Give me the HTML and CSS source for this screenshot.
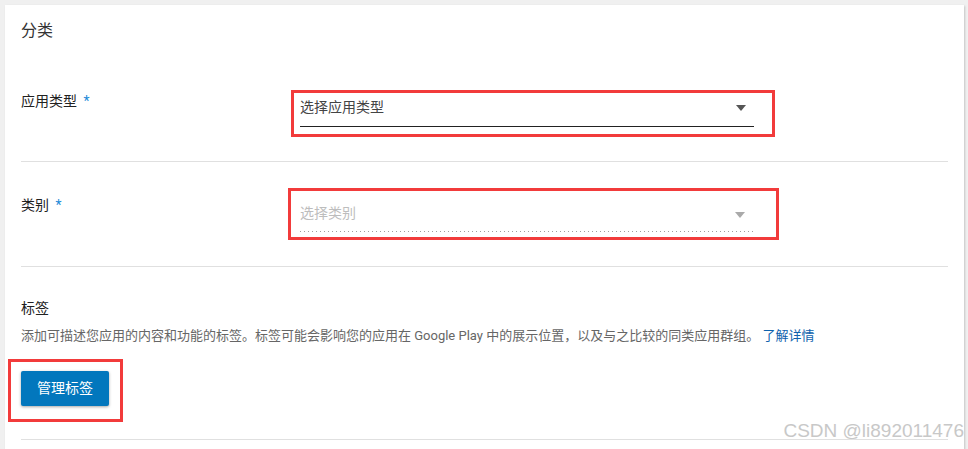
FILE: index.html
```html
<!DOCTYPE html>
<html lang="zh-CN">
<head>
<meta charset="utf-8">
<title>分类</title>
<link rel="stylesheet" href="styles.css">
</head>
<body>
<div class="page">
  <div class="card">
    <section class="section section-a">
      <h2 class="title">分类</h2>
      <div class="row row-1">
        <div class="label">应用类型 <span class="req">*</span></div>
        <div class="mark mark-1">
          <div class="field field-active">
            <span class="value">选择应用类型</span>
            <span class="arrow"></span>
          </div>
        </div>
      </div>
    </section>
    <section class="section section-b">
      <div class="row row-2">
        <div class="label label-2">类别 <span class="req">*</span></div>
        <div class="mark mark-2">
          <div class="field field-disabled">
            <span class="value">选择类别</span>
            <span class="arrow arrow-disabled"></span>
          </div>
        </div>
      </div>
    </section>
    <section class="section section-c">
      <div class="subtitle">标签</div>
      <p class="desc">添加可描述您应用的内容和功能的标签。标签可能会影响您的应用在 Google Play 中的展示位置，以及与之比较的同类应用群组。 <a class="link" href="#">了解详情</a></p>
      <div class="mark mark-3">
        <button class="btn" type="button">管理标签</button>
      </div>
    </section>
  </div>
  <div class="watermark">CSDN @li892011476</div>
</div>
</body>
</html>
```

FILE: styles.css
```css
html, body {
  margin: 0;
  padding: 0;
}
body {
  background: #f0f0f0;
  font-family: Roboto, "Noto Sans CJK SC", sans-serif;
  color: #212121;
  overflow: hidden;
}
.page {
  position: relative;
  height: 449px;
  padding: 5px 4px 0 5px;
}
.card {
  background: #fff;
  height: 444px;
  padding: 13px 16px 0 16px;
  box-sizing: border-box;
  box-shadow: 1px 1px 2px rgba(0, 0, 0, 0.18);
}
.section {
  border-bottom: 1px solid #e0e0e0;
}
.title {
  margin: 0;
  font-size: 16px;
  font-weight: 400;
  line-height: 26px;
  color: #333;
}
.row {
  display: flex;
  align-items: flex-start;
}
.row-1 {
  margin-top: 46px;
  padding-bottom: 24px;
}
.section-b {
  padding: 26px 0;
}
.label {
  width: 270px;
  flex: none;
  font-size: 14px;
  line-height: 20px;
  margin-top: 1px;
}
.label-2 {
  width: 267px;
  margin-top: 7px;
}
.req {
  color: #1c8ad8;
  margin-left: 3px;
}
.mark {
  border: 3px solid #f23b3b;
  box-sizing: border-box;
}
.mark-1 {
  width: 484px;
  padding: 4px 18px 7px 6px;
}
.mark-2 {
  width: 491px;
  padding: 12px 23px 5px 9px;
}
.field {
  display: flex;
  align-items: center;
  justify-content: space-between;
  font-size: 14px;
  line-height: 20px;
  padding-right: 8px;
}
.field-active {
  height: 30px;
  padding-bottom: 9px;
  box-sizing: border-box;
  border-bottom: 1px solid #222;
  color: #444;
}
.field-disabled {
  height: 29px;
  padding-bottom: 9px;
  box-sizing: border-box;
  color: #bdbdbd;
  background-image: linear-gradient(to right, #9e9e9e 1px, transparent 1px);
  background-size: 4px 1px;
  background-repeat: repeat-x;
  background-position: left bottom;
}
.arrow {
  width: 0;
  height: 0;
  border-left: 5.5px solid transparent;
  border-right: 5.5px solid transparent;
  border-top: 6px solid #555;
  margin-top: 2px;
}
.arrow-disabled {
  border-top-color: #aaa;
  margin-top: 4px;
}
.section-c {
  padding: 31px 0 17px;
}
.subtitle {
  font-size: 14px;
  line-height: 20px;
}
.desc {
  margin: 8px 0 0;
  font-size: 13px;
  line-height: 20px;
  color: #666;
}
.link {
  color: #0e62ad;
  text-decoration: none;
}
.mark-3 {
  display: inline-flex;
  margin: 13px 0 0 -13px;
  padding: 9px 11px 13px 10px;
}
.btn {
  height: 35px;
  padding: 0 16px;
  border: none;
  border-radius: 2px;
  background: #0277bd;
  color: #fff;
  font-family: Roboto, "Noto Sans CJK SC", sans-serif;
  font-size: 14px;
  line-height: 35px;
  box-shadow: 0 1px 3px rgba(0, 0, 0, 0.35);
}
.watermark {
  position: absolute;
  right: 4px;
  top: 420px;
  font-family: "Liberation Sans", Arial, sans-serif;
  font-size: 19px;
  line-height: 22px;
  color: #c8c8c8;
  text-shadow: 0 0 1px #fff;
}
```
